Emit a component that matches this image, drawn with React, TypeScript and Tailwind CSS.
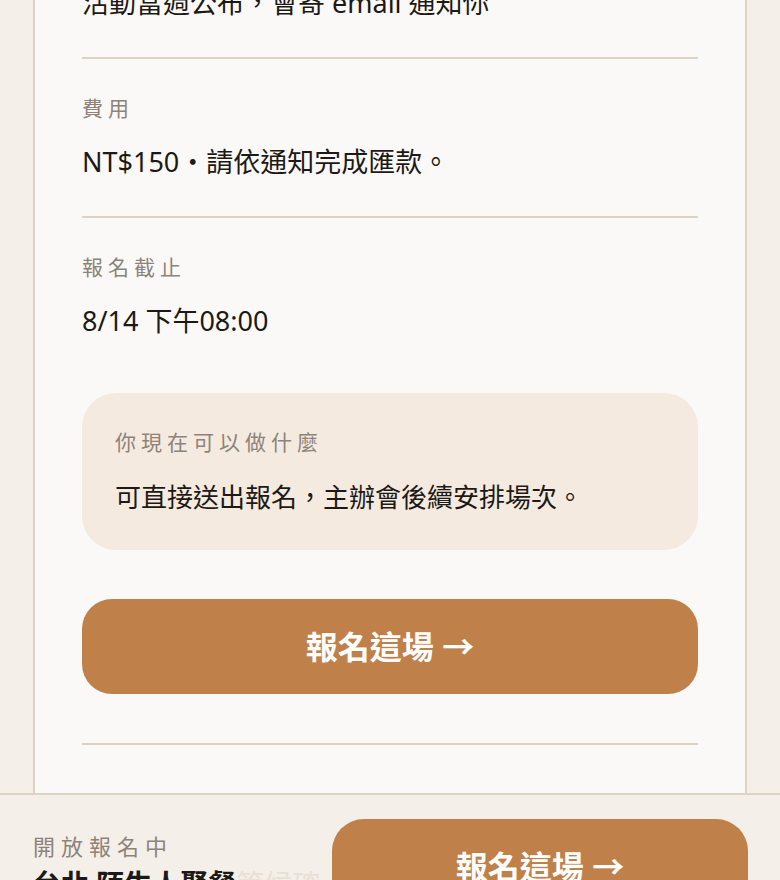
import React from 'react';

const Field: React.FC<{ label: string; value: string; first?: boolean }> = ({ label, value, first }) => {
  return (
    <div className={first ? 'pt-[35px] pb-[36px]' : 'border-t-2 border-[#ddd3c5] pt-[35px] pb-[36px]'}>
      <div className="text-[21px] leading-[28px] tracking-[5px] text-[#8d837a]">{label}</div>
      <div className="mt-[22px] text-[27px] leading-[36px] text-[#1c1916] whitespace-nowrap">{value}</div>
    </div>
  );
};

const App: React.FC = () => {
  return (
    <div
      lang="zh-TW"
      className="h-[880px] overflow-hidden flex flex-col bg-[#f4f0e9] font-['Noto_Sans','Noto_Sans_CJK_TC',sans-serif]"
    >
      {/* scrolled page content */}
      <div className="flex-1 min-h-0 overflow-hidden px-[33px]">
        <div className="-mt-[100px] border-x-2 border-[#ddd4c6] bg-[#fbf9f7] px-[47px] pb-[120px]">
          <Field first label="場次公布" value="活動當週公布，會寄 email 通知你" />
          <Field label="費用" value="NT$150・請依通知完成匯款。" />
          <Field label="報名截止" value="8/14 下午08:00" />

          {/* what you can do now */}
          <div className="mt-[18px] rounded-[34px] bg-[#f4eadf] px-[33px] pt-[35px] pb-[35px]">
            <div className="text-[21px] leading-[28px] tracking-[5px] text-[#8d837a]">你現在可以做什麼</div>
            <div className="mt-[23px] text-[26px] leading-[36px] text-[#1c1916] whitespace-nowrap">
              可直接送出報名，主辦會後續安排場次。
            </div>
          </div>

          <button className="mt-[49px] flex h-[95px] w-full items-center justify-center rounded-[30px] bg-[#c0804a] text-[32px] font-bold text-white">
            報名這場 →
          </button>

          <div className="mt-[49px] border-t-2 border-[#ddd3c5]" />
        </div>
      </div>

      {/* sticky bottom bar */}
      <div className="h-[87px] shrink-0 overflow-hidden border-t-2 border-[#ddd4c6] bg-[#f4f0e9] flex items-start gap-[12px] pl-[33px] pr-[32px] pt-[24px]">
        <div className="mt-[12px] flex-1 min-w-0">
          <div className="text-[22px] leading-[30px] tracking-[6px] text-[#8d837a]">開放報名中</div>
          <div className="mt-[5px] overflow-hidden whitespace-nowrap text-[28px] font-bold leading-[36px] text-[#1c1916]">
            台北 陌生人聚餐<span className="font-normal text-[#e8e0d5]">等候確認</span>
          </div>
        </div>
        <button className="flex h-[96px] w-[416px] shrink-0 items-center justify-center rounded-[32px] bg-[#c0804a] text-[32px] font-bold text-white">
          報名這場 →
        </button>
      </div>
    </div>
  );
};

export default App;
